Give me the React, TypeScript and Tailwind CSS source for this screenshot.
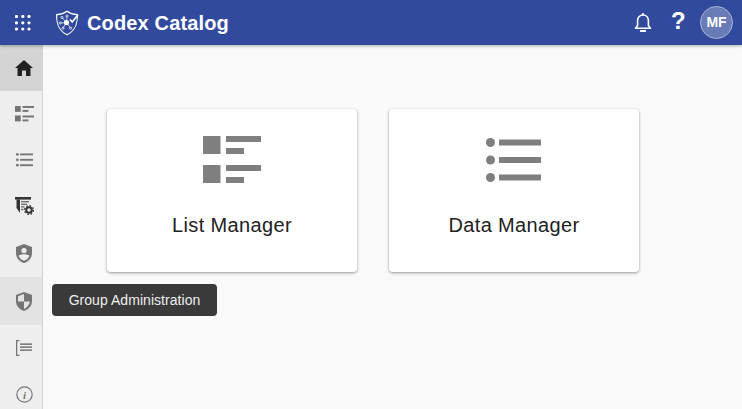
const font = "font-['Liberation_Sans',Arial,sans-serif]";

function GridIcon() {
  return (
    <svg width="16" height="16" viewBox="0 0 16 16" fill="#fff">
      {[1.5, 7.8, 14].map((y) =>
        [1.5, 7.8, 14].map((x) => <circle key={`${x}-${y}`} cx={x} cy={y} r="1.6" />)
      )}
    </svg>
  );
}

function Logo() {
  return (
    <svg width="24" height="26" viewBox="0 0 24 26" fill="none" stroke="#fff" strokeWidth="1.1">
      <path d="M12 1.2 C9 3.4 5.5 4.4 1.6 4.6 C1.4 12 2.4 20 12 24.8 C21.6 20 22.6 12 22.4 4.6 C18.5 4.4 15 3.4 12 1.2 Z" />
      <circle cx="11.5" cy="12.5" r="2.6" fill="#fff" stroke="none" />
      <path d="M11.5 12.5 L7 7.5 M11.5 12.5 L5.5 13 M11.5 12.5 L8 18 M11.5 12.5 L15.5 18 M11.5 12.5 L12 6.5" strokeWidth="0.7" />
      <circle cx="7" cy="7.5" r="1.1" strokeWidth="0.7" />
      <circle cx="5.2" cy="13" r="1.1" strokeWidth="0.7" />
      <circle cx="8" cy="18.2" r="1.1" strokeWidth="0.7" />
      <circle cx="15.6" cy="18.2" r="1.1" strokeWidth="0.7" />
      <circle cx="12" cy="6" r="1.1" strokeWidth="0.7" />
      <path d="M15 9.5 L17.2 12 L23 4.8" strokeWidth="1.6" />
    </svg>
  );
}

function Bell() {
  return (
    <svg width="18" height="21" viewBox="0 0 18 21" fill="none" stroke="#fff" strokeWidth="1.6">
      <path d="M1.5 16.2 H16.5 L14.4 13.6 V8.6 C14.4 5.2 12 3 9 3 C6 3 3.6 5.2 3.6 8.6 V13.6 Z" strokeLinejoin="round" />
      <path d="M9 1 V3" />
      <path d="M6.8 19 H11.2" strokeWidth="2" strokeLinecap="round" />
    </svg>
  );
}

function ListManagerIcon({ size, className }: { size: number; className?: string }) {
  return (
    <svg width={size} height={(size * 47) / 58} viewBox="0 0 58 47" fill="currentColor" className={className}>
      <rect x="0" y="0" width="17.5" height="18" />
      <rect x="23" y="0" width="35" height="6" />
      <rect x="23" y="12" width="18" height="6" />
      <rect x="0" y="29" width="17.5" height="18" />
      <rect x="23" y="29" width="35" height="6" />
      <rect x="23" y="41" width="18" height="6" />
    </svg>
  );
}

function DataManagerIcon({ size, className }: { size: number; className?: string }) {
  return (
    <svg width={size} height={(size * 44) / 55} viewBox="0 0 55 44" fill="currentColor" className={className}>
      <circle cx="4.5" cy="4.5" r="4.5" />
      <rect x="13" y="1.5" width="42" height="6" />
      <circle cx="4.5" cy="22" r="4.5" />
      <rect x="13" y="19" width="42" height="6" />
      <circle cx="4.5" cy="39.5" r="4.5" />
      <rect x="13" y="36.5" width="42" height="6" />
    </svg>
  );
}

function HomeIcon() {
  return (
    <svg width="18" height="16" viewBox="0 0 18 16" fill="#212121">
      <path d="M9 0 L18 8 H15.5 V16 H11 V10.5 H7 V16 H2.5 V8 H0 Z" />
    </svg>
  );
}

function ListSettingsIcon() {
  return (
    <svg width="19" height="18" viewBox="0 0 19 18" fill="#333333">
      <rect x="0" y="0" width="16" height="2.6" />
      <path d="M1.5 2.6 H5 V16 L1.5 11 Z" />
      <rect x="6" y="4" width="8" height="1.3" fill="#666666" />
      <rect x="6" y="6.6" width="6" height="1.3" fill="#666666" />
      <rect x="6" y="9.2" width="3.5" height="1.3" fill="#666666" />
      <rect x="6" y="11.8" width="2.5" height="1.3" fill="#666666" />
      <circle cx="14" cy="13" r="2.8" fill="none" stroke="#333333" strokeWidth="2" />
      <circle cx="14" cy="13" r="4.4" fill="none" stroke="#333333" strokeWidth="1.3" strokeDasharray="1.7 1.75" />
    </svg>
  );
}

function ShieldUserIcon() {
  return (
    <svg width="16" height="19" viewBox="0 0 16 19" fill="#757575">
      <path d="M8 0 L16 3 V9 C16 14 12.5 17.6 8 19 C3.5 17.6 0 14 0 9 V3 Z" />
      <circle cx="8" cy="6.6" r="2.6" fill="#eeeeee" />
      <path d="M2.6 11.8 C5 9.8 11 9.8 13.4 11.8 C12.4 14.4 10.4 16 8 16.8 C5.6 16 3.6 14.4 2.6 11.8 Z" fill="#eeeeee" />
    </svg>
  );
}

function ShieldHalfIcon() {
  return (
    <svg width="16" height="19" viewBox="0 0 16 19" fill="#757575">
      <path fillRule="evenodd" d="M8 0 L16 3 V9 C16 14 12.5 17.6 8 19 C3.5 17.6 0 14 0 9 V3 Z M8 2 L2 4.3 V9.5 H8 Z M8 9.5 V17 C11 15.8 13.4 13 13.9 9.5 Z" />
    </svg>
  );
}

function TreeListIcon() {
  return (
    <svg width="16" height="16" viewBox="0 0 16 16" fill="#757575">
      <path d="M0 0 H3.5 V1.2 H1.3 V14.8 H3.5 V16 H0 Z" />
      <rect x="4" y="3.4" width="12" height="1.5" />
      <rect x="4" y="6.4" width="12" height="1.5" />
      <rect x="4" y="9.4" width="12" height="1.5" />
    </svg>
  );
}

function InfoIcon() {
  return (
    <svg width="17" height="17" viewBox="0 0 17 17" fill="none">
      <circle cx="8.5" cy="8.5" r="7.7" stroke="#757575" strokeWidth="1.2" />
      <text x="8.5" y="12.6" textAnchor="middle" fontSize="11" fontStyle="italic" fontWeight="700" fontFamily="'Liberation Serif', serif" fill="#757575">i</text>
    </svg>
  );
}

const sideItems = [
  { id: "home", icon: <HomeIcon />, bg: "bg-[#d4d4d4]", h: "h-[46px]" },
  { id: "lists", icon: <ListManagerIcon size={19} className="text-[#757575]" />, bg: "", h: "h-[46px]" },
  { id: "data", icon: <DataManagerIcon size={17} className="text-[#757575]" />, bg: "", h: "h-[46px]" },
  { id: "settings", icon: <ListSettingsIcon />, bg: "", h: "h-[46px]" },
  { id: "user", icon: <ShieldUserIcon />, bg: "", h: "h-[48px]" },
  { id: "group", icon: <ShieldHalfIcon />, bg: "bg-[#e3e3e3]", h: "h-[48px]" },
  { id: "tree", icon: <TreeListIcon />, bg: "", h: "h-[46px]" },
  { id: "info", icon: <InfoIcon />, bg: "", h: "h-[46px]" },
];

function Card({ label, icon }: { label: string; icon: React.ReactNode }) {
  return (
    <div className="w-[250px] h-[163px] bg-white rounded-[4px] shadow-[0_1px_3px_rgba(0,0,0,0.4)] flex flex-col items-center">
      <div className="h-[75px] mt-[27px] flex items-start justify-center">{icon}</div>
      <div className="text-[20px] leading-[24px] tracking-[0.35px] text-[#212121] mt-[2px]">{label}</div>
    </div>
  );
}

export default function App() {
  return (
    <div className={`${font} w-[742px] h-[409px] overflow-hidden flex flex-col bg-[#f9f9f9]`}>
      <header className="relative z-10 h-[45px] shrink-0 bg-[#314a9e] shadow-[0_1px_3px_rgba(0,0,0,0.3)] flex items-center text-white">
        <div className="ml-[15px]"><GridIcon /></div>
        <div className="ml-[24px]"><Logo /></div>
        <div className="ml-[8px] text-[20px] font-bold tracking-[0.15px]">Codex Catalog</div>
        <div className="ml-auto flex items-center mr-[9px]">
          <Bell />
          <span className="ml-[19px] mb-[3px] w-[13px] text-[24px] font-bold leading-none">?</span>
          <div className="ml-[16px] w-[33px] h-[33px] rounded-full bg-[#6a7cb8] border border-[#aab4d6] flex items-center justify-center text-[14px] font-bold">MF</div>
        </div>
      </header>
      <div className="flex flex-1 min-h-0">
        <nav className="w-[43px] shrink-0 bg-[#eeeeee] border-r border-[#d4d4d4] flex flex-col">
          {sideItems.map((item) => (
            <div key={item.id} className={`${item.h} shrink-0 flex items-center justify-center pl-[6px] ${item.bg}`}>
              {item.icon}
            </div>
          ))}
        </nav>
        <main className="relative flex-1">
          <div className="flex gap-[32px] pl-[64px] pt-[64px]">
            <Card label="List Manager" icon={<ListManagerIcon size={58} className="text-[#7f7f7f]" />} />
            <Card label="Data Manager" icon={<div className="mt-[2px] mr-[2px]"><DataManagerIcon size={55} className="text-[#7f7f7f]" /></div>} />
          </div>
          <div className="absolute left-[9px] top-[239px] w-[165px] h-[32px] rounded-[4px] bg-[#3a3a3a] text-[#eeeeee] text-[14px] tracking-[0.05px] flex items-center justify-center">
            Group Administration
          </div>
        </main>
      </div>
    </div>
  );
}
